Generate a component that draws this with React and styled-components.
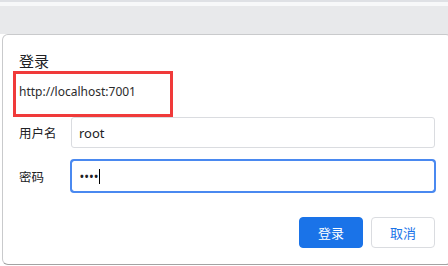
import React from "react";
import styled, { createGlobalStyle, css } from "styled-components";

const GlobalStyle = createGlobalStyle`
  html, body {
    margin: 0;
    padding: 0;
    background: #ffffff;
  }
  body {
    font-family: "Noto Sans", "Noto Sans CJK SC", sans-serif;
    color: #202124;
  }
`;

const fields = [
  { id: "user", label: "用户名", value: "root" },
  { id: "pass", label: "密码", value: "••••", focused: true },
];

const App = () => {
  return (
    <>
      <GlobalStyle />
      <Page>
        <TabStrip>
          <TopEdge />
          <Toolbar />
        </TabStrip>
        <Stage>
          <Dialog>
            <Title>登录</Title>
            <Origin>http://localhost:7001</Origin>
            <Form>
              {fields.map((field) => (
                <Row key={field.id}>
                  <Label>{field.label}</Label>
                  <Field focused={field.focused}>
                    <FieldText secret={field.focused}>{field.value}</FieldText>
                    {field.focused && <Caret />}
                  </Field>
                </Row>
              ))}
            </Form>
            <Actions>
              <Button primary>登录</Button>
              <Button>取消</Button>
            </Actions>
          </Dialog>
        </Stage>
      </Page>
    </>
  );
};

const Page = styled.div`
  width: 448px;
  height: 266px;
  overflow: hidden;
  display: flex;
  flex-direction: column;
  background: #ffffff;
`;

const TabStrip = styled.div`
  display: flex;
  flex-direction: column;
`;

const TopEdge = styled.div`
  height: 2px;
  background: #dfe1e5;
  border-bottom: 4px solid #f7f8f9;
`;

const Toolbar = styled.div`
  height: 28px;
  background: #e8e9eb;
`;

const Stage = styled.div`
  display: flex;
  padding-left: 2px;
`;

const Dialog = styled.div`
  flex: none;
  width: 450px;
  box-sizing: border-box;
  border: 1px solid #c9cacc;
  border-bottom-color: #a3a3a3;
  border-radius: 6px;
  background: #ffffff;
  padding: 16px 16px 16px 16px;
  display: flex;
  flex-direction: column;
`;

const Title = styled.h2`
  margin: 0;
  font-size: 15px;
  line-height: 20px;
  font-weight: 400;
  font-family: "Noto Sans CJK SC", sans-serif;
`;

const Origin = styled.div`
  align-self: flex-start;
  box-sizing: border-box;
  width: 160px;
  height: 46px;
  margin-left: -6px;
  border: 3px solid #f03a3a;
  padding: 9px 0 0 3px;
  font-size: 12px;
  line-height: 18px;
  color: #2b2b2b;
`;

const Form = styled.div`
  display: flex;
  flex-direction: column;
  gap: 12px;
`;

const Row = styled.div`
  display: grid;
  grid-template-columns: 52px 1fr;
  align-items: center;
`;

const Label = styled.span`
  font-family: "Noto Sans CJK SC", sans-serif;
  font-size: 12.5px;
  color: #202124;
`;

const Field = styled.div`
  box-sizing: border-box;
  height: 31px;
  border: 1px solid #dadce0;
  border-radius: 3px;
  padding: 0 7px;
  display: flex;
  align-items: center;
  font-size: 13px;
  ${(props) =>
    props.focused &&
    css`
      height: 32px;
      outline: 2px solid #4a89f0;
      outline-offset: -1px;
      border-color: #4a89f0;
    `};
`;

const FieldText = styled.span`
  color: #202124;
  ${(props) =>
    props.secret &&
    css`
      font-size: 10px;
      font-weight: 700;
      letter-spacing: 1px;
      padding-left: 1px;
      line-height: 1;
    `};
`;

const Caret = styled.span`
  width: 1px;
  height: 15px;
  background: #000000;
  margin-left: 0;
`;

const Actions = styled.div`
  display: flex;
  justify-content: flex-end;
  gap: 8px;
  margin-top: 25px;
`;

const Button = styled.button`
  box-sizing: border-box;
  width: 64px;
  height: 31px;
  border-radius: 4px;
  font-family: "Noto Sans CJK SC", sans-serif;
  font-size: 13px;
  cursor: pointer;
  border: 1px solid #dadce0;
  background: #ffffff;
  color: #1a73e8;
  ${(props) =>
    props.primary &&
    css`
      border-color: #1a73e8;
      background: #1a73e8;
      color: #ffffff;
    `};
`;

export default App;
